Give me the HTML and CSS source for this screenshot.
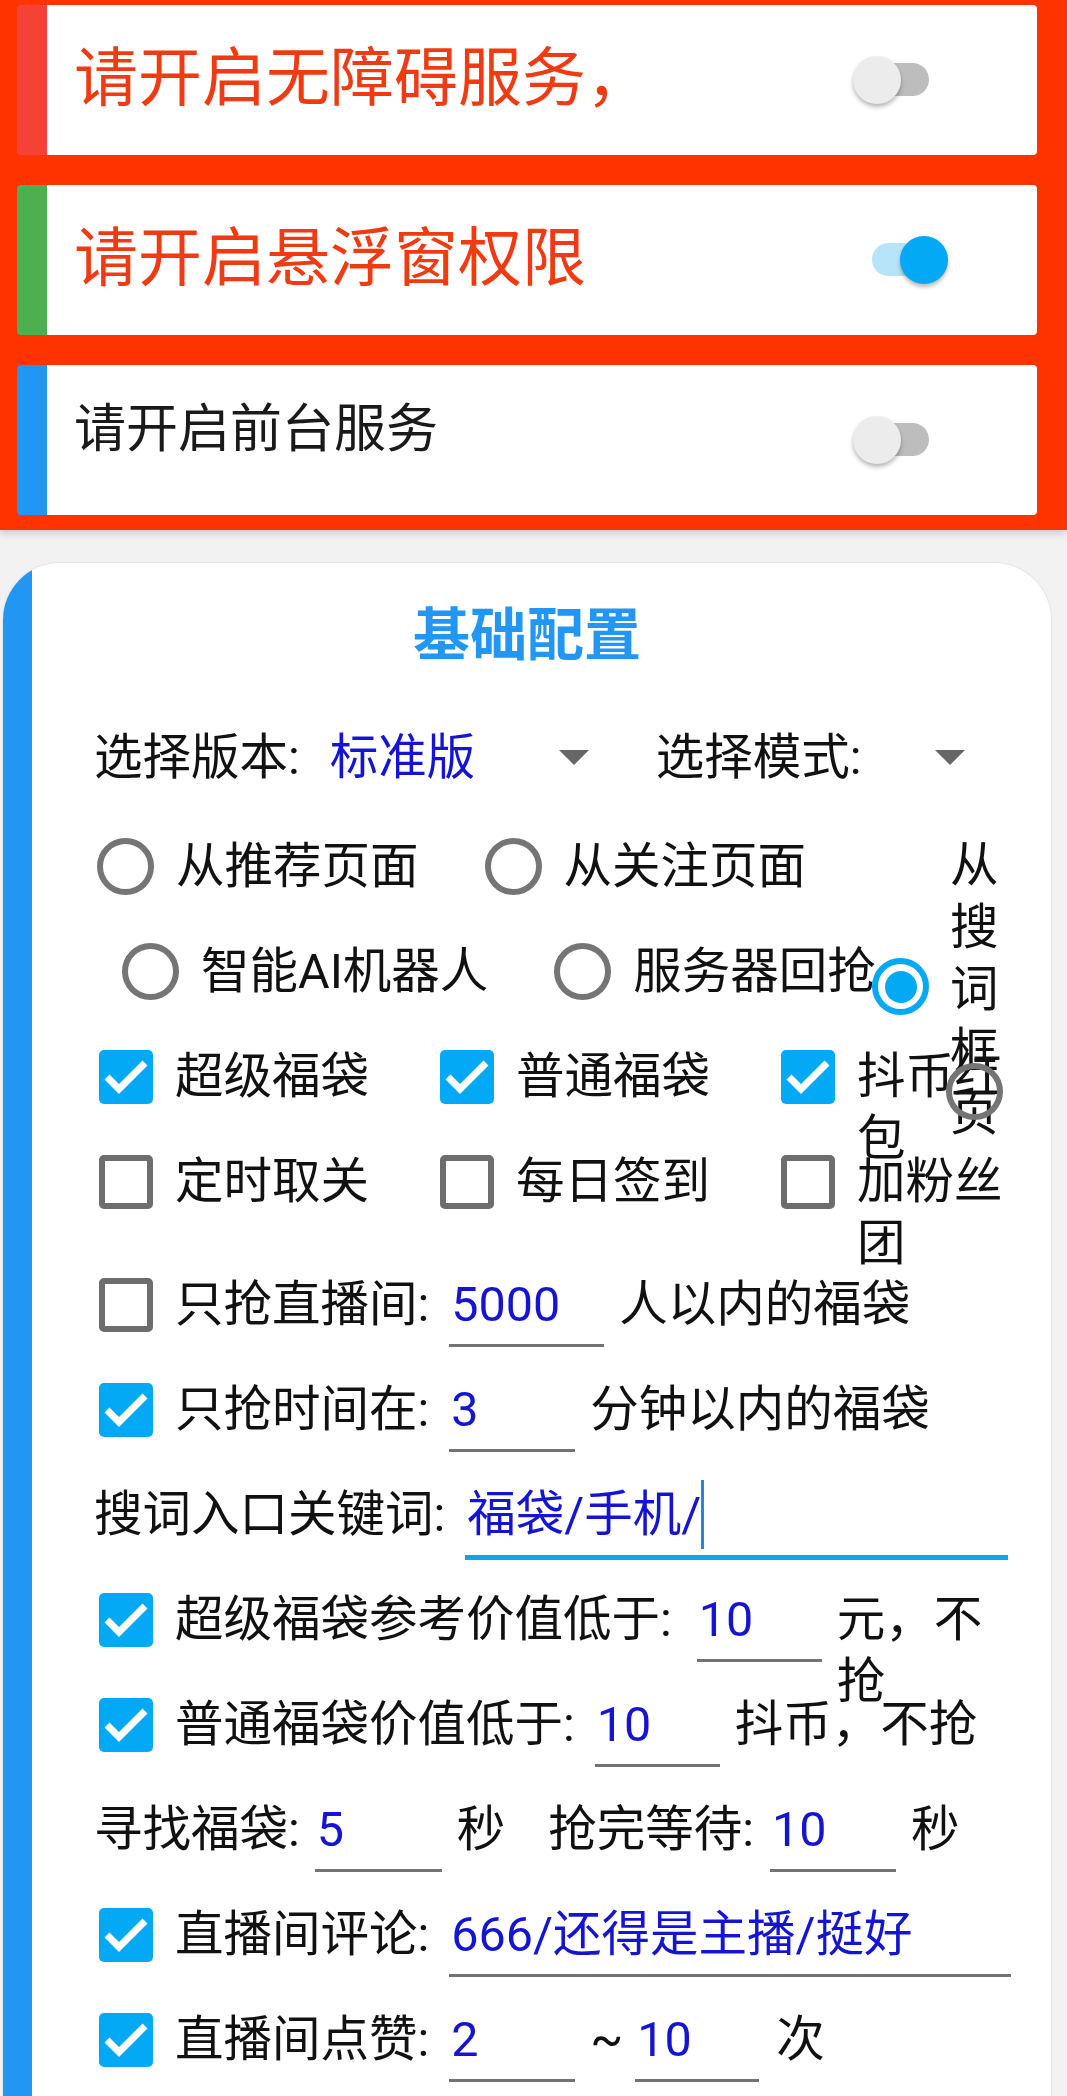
FILE: index.html
```html
<!DOCTYPE html>
<html lang="zh-CN">
  <head>
    <meta charset="UTF-8" />
    <meta name="viewport" content="width=device-width, initial-scale=1.0" />
    <title>福袋助手</title>
    <link rel="stylesheet" href="styles.css">
  </head>
  <body>
    <!-- 权限卡片 -->
    <div class="perms">
      <div class="perm perm-red">
        <span class="perm-text">请开启无障碍服务，</span>
        <span class="switch"><span class="track"></span><span class="thumb"></span></span>
      </div>
      <div class="perm perm-green">
        <span class="perm-text">请开启悬浮窗权限</span>
        <span class="switch on"><span class="track"></span><span class="thumb"></span></span>
      </div>
      <div class="perm perm-blue">
        <span class="perm-text small">请开启前台服务</span>
        <span class="switch"><span class="track"></span><span class="thumb"></span></span>
      </div>
    </div>

    <!-- 基础配置 -->
    <div class="config">
      <h2 class="config-title">基础配置</h2>

      <div class="row row-select">
        <span>选择版本:</span>
        <span class="spinner wide"><span class="val">标准版</span><i class="arrow"></i></span>
        <span class="sel-label">选择模式:</span>
        <span class="spinner narrow"><i class="arrow"></i></span>
      </div>

      <div class="row row-radio">
        <span class="opt"><i class="radio"></i><span class="opt-text">从推荐页面</span></span>
        <span class="opt"><i class="radio"></i><span class="opt-text">从关注页面</span></span>
      </div>

      <div class="row row-radio indent">
        <span class="opt"><i class="radio"></i><span class="opt-text">智能AI机器人</span></span>
        <span class="opt"><i class="radio"></i><span class="opt-text">服务器回抢</span></span>
      </div>

      <div class="row grid3">
        <span class="opt"><i class="box on"><svg viewBox="0 0 54 54"><polyline points="8,27 20,39 46,13" /></svg></i><span class="opt-text">超级福袋</span></span>
        <span class="opt"><i class="box on"><svg viewBox="0 0 54 54"><polyline points="8,27 20,39 46,13" /></svg></i><span class="opt-text">普通福袋</span></span>
        <span class="opt"><i class="box on"><svg viewBox="0 0 54 54"><polyline points="8,27 20,39 46,13" /></svg></i><span class="opt-text">抖币红包</span></span>
      </div>

      <div class="row grid3 tall">
        <span class="opt"><i class="box"></i><span class="opt-text">定时取关</span></span>
        <span class="opt"><i class="box"></i><span class="opt-text">每日签到</span></span>
        <span class="opt"><i class="box"></i><span class="opt-text">加粉丝团</span></span>
      </div>

      <div class="row">
        <i class="box"></i>
        <span>只抢直播间:</span>
        <span class="edit w155">5000</span>
        <span class="txt">人以内的福袋</span>
      </div>

      <div class="row">
        <i class="box on"><svg viewBox="0 0 54 54"><polyline points="8,27 20,39 46,13" /></svg></i>
        <span>只抢时间在:</span>
        <span class="edit w126">3</span>
        <span class="txt">分钟以内的福袋</span>
      </div>

      <div class="row">
        <span>搜词入口关键词:</span>
        <span class="edit focus"><span>福袋/手机/</span><i class="caret"></i></span>
      </div>

      <div class="row">
        <i class="box on"><svg viewBox="0 0 54 54"><polyline points="8,27 20,39 46,13" /></svg></i>
        <span>超级福袋参考价值低于:</span>
        <span class="edit w125 ml25">10</span>
        <span class="txt">元，不抢</span>
      </div>

      <div class="row">
        <i class="box on"><svg viewBox="0 0 54 54"><polyline points="8,27 20,39 46,13" /></svg></i>
        <span>普通福袋价值低于:</span>
        <span class="edit w125">10</span>
        <span class="txt">抖币，不抢</span>
      </div>

      <div class="row">
        <span>寻找福袋:</span>
        <span class="edit w127 ml15">5</span>
        <span>秒</span>
        <span class="gap47">抢完等待:</span>
        <span class="edit w126 ml16">10</span>
        <span>秒</span>
      </div>

      <div class="row">
        <i class="box on"><svg viewBox="0 0 54 54"><polyline points="8,27 20,39 46,13" /></svg></i>
        <span>直播间评论:</span>
        <span class="edit w562">666/还得是主播/挺好</span>
      </div>

      <div class="row">
        <i class="box on"><svg viewBox="0 0 54 54"><polyline points="8,27 20,39 46,13" /></svg></i>
        <span>直播间点赞:</span>
        <span class="edit w126">2</span>
        <span>~</span>
        <span class="edit w124 ml12 mr17">10</span>
        <span>次</span>
      </div>

      <!-- 溢出的第三个选项 -->
      <div class="stray-col">从搜词框页</div>
      <i class="radio on stray-a"></i>
      <i class="radio stray-b"></i>
    </div>
  </body>
</html>
```

FILE: styles.css
```css
body {
  margin: 0;
  background-color: #f2f2f2;
  font-family: Roboto, "Noto Sans CJK SC", sans-serif;
  color: #111;
  overflow: hidden;
}

/* 权限卡片 */
.perms {
  position: relative;
  z-index: 1;
  background-color: #ff3300;
  padding: 5px 0 15px;
  box-shadow: 0 3px 8px rgba(0, 0, 0, 0.18);
}

.perm {
  display: flex;
  align-items: center;
  height: 150px;
  margin: 0 30px 30px 17px;
  padding-left: 57px;
  border-radius: 4px;
  background: linear-gradient(to right, #f44336 30px, #fff 30px);
}

.perm:last-child {
  margin-bottom: 0;
}

.perm-green {
  background: linear-gradient(to right, #4caf50 30px, #fff 30px);
}

.perm-blue {
  background: linear-gradient(to right, #2196f3 30px, #fff 30px);
}

.perm-text {
  font-size: 64px;
  line-height: 80px;
  color: #f03a12;
  margin-bottom: 3px;
}

.perm-text.small {
  font-size: 52px;
  color: #1a1a1a;
  margin-bottom: 20px;
}

/* 开关 */
.switch {
  position: relative;
  flex: none;
  width: 95px;
  height: 48px;
  margin-left: auto;
  margin-right: 89px;
}

.switch .track {
  position: absolute;
  left: 19px;
  top: 7px;
  width: 57px;
  height: 33px;
  border-radius: 17px;
  background-color: #bdbdbd;
}

.switch .thumb {
  position: absolute;
  left: 0;
  top: 0;
  width: 48px;
  height: 48px;
  border-radius: 50%;
  background-color: #ececec;
  box-shadow: 0 3px 4px rgba(0, 0, 0, 0.28);
}

.switch.on .track {
  background-color: #b8e4fa;
}

.switch.on .thumb {
  left: 47px;
  background-color: #03a9f4;
}

/* 基础配置 */
.config {
  position: relative;
  margin: 33px 16px 0 3px;
  padding: 0 41px 0 91px;
  min-height: 1540px;
  border-radius: 57px 57px 0 0;
  background: linear-gradient(to right, #2196f3 29px, #fff 29px);
  box-shadow: 0 0 2px rgba(0, 0, 0, 0.18);
  font-size: 48.5px;
}

.config-title {
  margin: 0 -41px 34px -91px;
  padding-top: 38px;
  font-size: 57px;
  line-height: 70px;
  font-weight: bold;
  color: #2196f3;
  text-align: center;
}

.row {
  display: flex;
  align-items: flex-start;
  box-sizing: border-box;
  height: 105px;
  padding-top: 21.5px;
  line-height: 62px;
  white-space: nowrap;
}

.row.row-select {
  height: 109px;
}

.row.tall {
  height: 123px;
}

.row .txt,
.row .opt-text {
  white-space: normal;
}

/* 下拉框 */
.spinner {
  display: flex;
  align-items: center;
  height: 62px;
  margin-left: 30px;
  flex: none;
}

.spinner.wide {
  width: 270px;
}

.spinner.narrow {
  width: 84px;
}

.spinner .val {
  color: #1414d2;
}

.arrow {
  margin-left: auto;
  margin-right: 11px;
  width: 0;
  height: 0;
  border-left: 15px solid transparent;
  border-right: 15px solid transparent;
  border-top: 15px solid #666;
}

.sel-label {
  margin-left: 56px;
}

/* 单选 */
.row-radio {
  column-gap: 63px;
}

.row-radio.indent {
  padding-left: 25px;
}

.opt {
  display: flex;
  align-items: flex-start;
  min-width: 0;
}

.radio {
  flex: none;
  box-sizing: border-box;
  width: 57px;
  height: 57px;
  margin: 2.5px 22px 0 3px;
  border: 6px solid #757575;
  border-radius: 50%;
  position: relative;
}

.radio.on {
  border-color: #03a9f4;
}

.radio.on::after {
  content: "";
  position: absolute;
  left: 6.5px;
  top: 6.5px;
  width: 32px;
  height: 32px;
  border-radius: 50%;
  background-color: #03a9f4;
}

.stray-col {
  position: absolute;
  left: 947px;
  top: 272px;
  width: 50px;
  font-size: 48.5px;
  line-height: 62px;
}

.stray-a {
  position: absolute;
  left: 869px;
  top: 395px;
  margin: 0;
}

.stray-b {
  position: absolute;
  left: 943px;
  top: 500px;
  margin: 0;
}

/* 复选框 */
.grid3 {
  display: grid;
  grid-template-columns: 341px 341px 1fr;
}

.box {
  flex: none;
  box-sizing: border-box;
  width: 54px;
  height: 54px;
  margin: 4px 22px 0 5px;
  border: 6px solid #6d6d6d;
  border-radius: 5px;
  background-color: #fff;
}

.box.on {
  border: none;
  background-color: #03a9f4;
}

.box svg {
  display: block;
  width: 54px;
  height: 54px;
}

.box polyline {
  fill: none;
  stroke: #fff;
  stroke-width: 7;
}

/* 输入框 */
.edit {
  flex: none;
  box-sizing: border-box;
  margin: 0 15px 0 20px;
  padding: 0 0 8px 2px;
  border-bottom: 3px solid #737373;
  color: #1414d2;
  line-height: 62px;
}

.edit.focus {
  display: flex;
  align-items: center;
  width: 543px;
  margin-right: 0;
  padding-bottom: 9px;
  border-bottom: 5px solid #12a3e8;
}

.caret {
  display: block;
  width: 3px;
  height: 69px;
  margin: -3.5px 0;
  background-color: #1e88e5;
}

.w124 { width: 124px; }
.w125 { width: 125px; }
.w126 { width: 126px; }
.w127 { width: 127px; }
.w155 { width: 155px; }
.w562 { width: 562px; margin-right: 0; }

.ml12 { margin-left: 12px; }
.ml15 { margin-left: 15px; }
.ml16 { margin-left: 16px; }
.ml25 { margin-left: 25px; }
.mr17 { margin-right: 17px; }

.gap47 {
  margin-left: 43px;
}

.row .txt {
  min-width: 0;
}
```
